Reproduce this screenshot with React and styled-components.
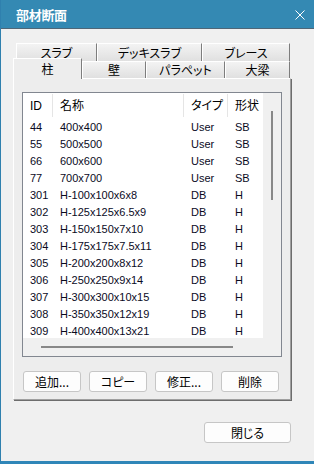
import React from "react";
import styled, { createGlobalStyle } from "styled-components";

const GlobalStyle = createGlobalStyle`
  html, body {
    margin: 0;
    padding: 0;
    background: #f0f0f0;
  }
  body {
    font-family: "Liberation Sans", "Noto Sans CJK JP", sans-serif;
    color: #000;
  }
`;

const Window = styled.div`
  width: 314px;
  height: 464px;
  box-sizing: border-box;
  display: flex;
  flex-direction: column;
  background: #f0f0f0;
  border-left: 1px solid #2f80ae;
  border-bottom: 3px solid #2f86b8;
`;

const TitleBar = styled.div`
  height: 29px;
  flex: none;
  box-sizing: border-box;
  display: flex;
  align-items: center;
  justify-content: space-between;
  padding: 2px 9px 0 15px;
  background: #3489b3;
  border-bottom: 1px solid #4f6677;
  color: #fff;
`;

const Title = styled.span`
  font: bold 13px/16px "Noto Sans CJK JP", sans-serif;
  letter-spacing: -0.3px;
`;

const Body = styled.div`
  flex: 1;
  padding: 14px 0 0 12px;
`;

const TabRow = styled.div`
  display: flex;
  height: ${(p) => p.$h}px;
  padding-left: ${(p) => p.$indent || 0}px;
`;

/* selected tab is raised 3px over the back row and covers the pane's top edge */
const Tab = styled.div`
  position: relative;
  z-index: ${(p) => (p.$active ? 2 : 1)};
  width: ${(p) => p.$w}px;
  height: ${(p) => (p.$active ? "21px" : "100%")};
  margin-top: ${(p) => (p.$active ? -3 : 0)}px;
  box-sizing: border-box;
  display: flex;
  align-items: center;
  justify-content: center;
  font: 12px/14px "Noto Sans CJK JP", sans-serif;
  font-feature-settings: "palt";
  border: 1px solid;
  border-bottom: none;
  border-color: #fff #7d7d7d transparent #fff;
  background: ${(p) =>
    p.$active ? "#ededed" : "linear-gradient(#f3f3f3, #e0e0e0)"};
`;

const Panel = styled.div`
  width: 278px;
  height: 322px;
  box-sizing: border-box;
  border: 1px solid;
  border-color: #fff #a0a0a0 #a0a0a0 #fff;
  box-shadow: 1px 1px 0 #6d6d6d;
  background: #ededed;
  padding: 13px 0 0 8px;
`;

const ListBox = styled.div`
  width: 260px;
  height: 265px;
  box-sizing: border-box;
  border: 1px solid #828790;
  background: #fff;
  display: grid;
  grid-template-columns: 240px 18px;
  grid-template-rows: 245px 18px;
`;

const Content = styled.div`
  overflow: hidden;
  background: #fff;
`;

const cols = "30px 131px 44px 35px";

const HeaderRow = styled.div`
  display: grid;
  grid-template-columns: ${cols};
  height: 26px;
`;

const HeaderCell = styled.div`
  display: flex;
  align-items: center;
  padding-left: 7px;
  margin: 1px 0 2px;
  font: 12px/14px "Liberation Sans", "Noto Sans CJK JP", sans-serif;
  font-feature-settings: "palt";
  border-right: ${(p) => (p.$last ? "none" : "1px solid #e5e5e5")};
`;

const Row = styled.div`
  display: grid;
  grid-template-columns: ${cols};
  height: 17px;
  line-height: 17px;
  font-size: 11px;
  color: #0a0a1e;
`;

const Cell = styled.div`
  padding-left: 7px;
  white-space: nowrap;
`;

const Track = styled.div`
  background: #f0f0f0;
  display: flex;
  flex-direction: ${(p) => (p.$vertical ? "column" : "row")};
`;

const Thumb = styled.div`
  background: #888;
  flex: none;
  ${(p) =>
    p.$vertical
      ? `width: 2px; height: ${p.$len}px; margin: ${p.$at}px 0 0 8px;`
      : `height: 2px; width: ${p.$len}px; margin: 8px 0 0 ${p.$at}px;`}
`;

const ButtonRow = styled.div`
  display: flex;
  gap: 8px;
  margin: 14px 0 0 1px;
`;

const Button = styled.button`
  width: ${(p) => p.$w || 58}px;
  height: 21px;
  padding: 0;
  box-sizing: border-box;
  border: 1px solid #c6c6c6;
  border-radius: 3px;
  background: #fdfdfd;
  color: #000;
  font: 12px/14px "Noto Sans CJK JP", sans-serif;
  font-feature-settings: "palt";
`;

const Footer = styled.div`
  width: 278px;
  display: flex;
  justify-content: flex-end;
  margin-top: 22px;
`;

const rows = [
  ["44", "400x400", "User", "SB"],
  ["55", "500x500", "User", "SB"],
  ["66", "600x600", "User", "SB"],
  ["77", "700x700", "User", "SB"],
  ["301", "H-100x100x6x8", "DB", "H"],
  ["302", "H-125x125x6.5x9", "DB", "H"],
  ["303", "H-150x150x7x10", "DB", "H"],
  ["304", "H-175x175x7.5x11", "DB", "H"],
  ["305", "H-200x200x8x12", "DB", "H"],
  ["306", "H-250x250x9x14", "DB", "H"],
  ["307", "H-300x300x10x15", "DB", "H"],
  ["308", "H-350x350x12x19", "DB", "H"],
  ["309", "H-400x400x13x21", "DB", "H"],
];

const CloseIcon = () => (
  <svg width="10" height="10" viewBox="0 0 10 10">
    <path d="M0.5 0.5 L9.5 9.5 M9.5 0.5 L0.5 9.5" stroke="#fff" strokeWidth="1" />
  </svg>
);

export default function App() {
  return (
    <>
      <GlobalStyle />
      <Window>
        <TitleBar>
          <Title>部材断面</Title>
          <CloseIcon />
        </TitleBar>
        <Body>
          <TabRow $h={18} $indent={3}>
            <Tab $w={81}>スラブ</Tab>
            <Tab $w={105}>デッキスラブ</Tab>
            <Tab $w={88}>ブレース</Tab>
          </TabRow>
          <TabRow $h={17}>
            <Tab $w={69} $active>柱</Tab>
            <Tab $w={64}>壁</Tab>
            <Tab $w={79}>パラペット</Tab>
            <Tab $w={65}>大梁</Tab>
          </TabRow>
          <Panel>
            <ListBox>
              <Content>
                <HeaderRow>
                  <HeaderCell>ID</HeaderCell>
                  <HeaderCell>名称</HeaderCell>
                  <HeaderCell>タイプ</HeaderCell>
                  <HeaderCell $last>形状</HeaderCell>
                </HeaderRow>
                {rows.map((r) => (
                  <Row key={r[0]}>
                    {r.map((c, i) => (
                      <Cell key={i}>{c}</Cell>
                    ))}
                  </Row>
                ))}
              </Content>
              <Track $vertical>
                <Thumb $vertical $at={18} $len={89} />
              </Track>
              <Track>
                <Thumb $at={18} $len={192} />
              </Track>
              <Track />
            </ListBox>
            <ButtonRow>
              <Button>追加...</Button>
              <Button>コピー</Button>
              <Button>修正...</Button>
              <Button>削除</Button>
            </ButtonRow>
          </Panel>
          <Footer>
            <Button $w={87}>閉じる</Button>
          </Footer>
        </Body>
      </Window>
    </>
  );
}
